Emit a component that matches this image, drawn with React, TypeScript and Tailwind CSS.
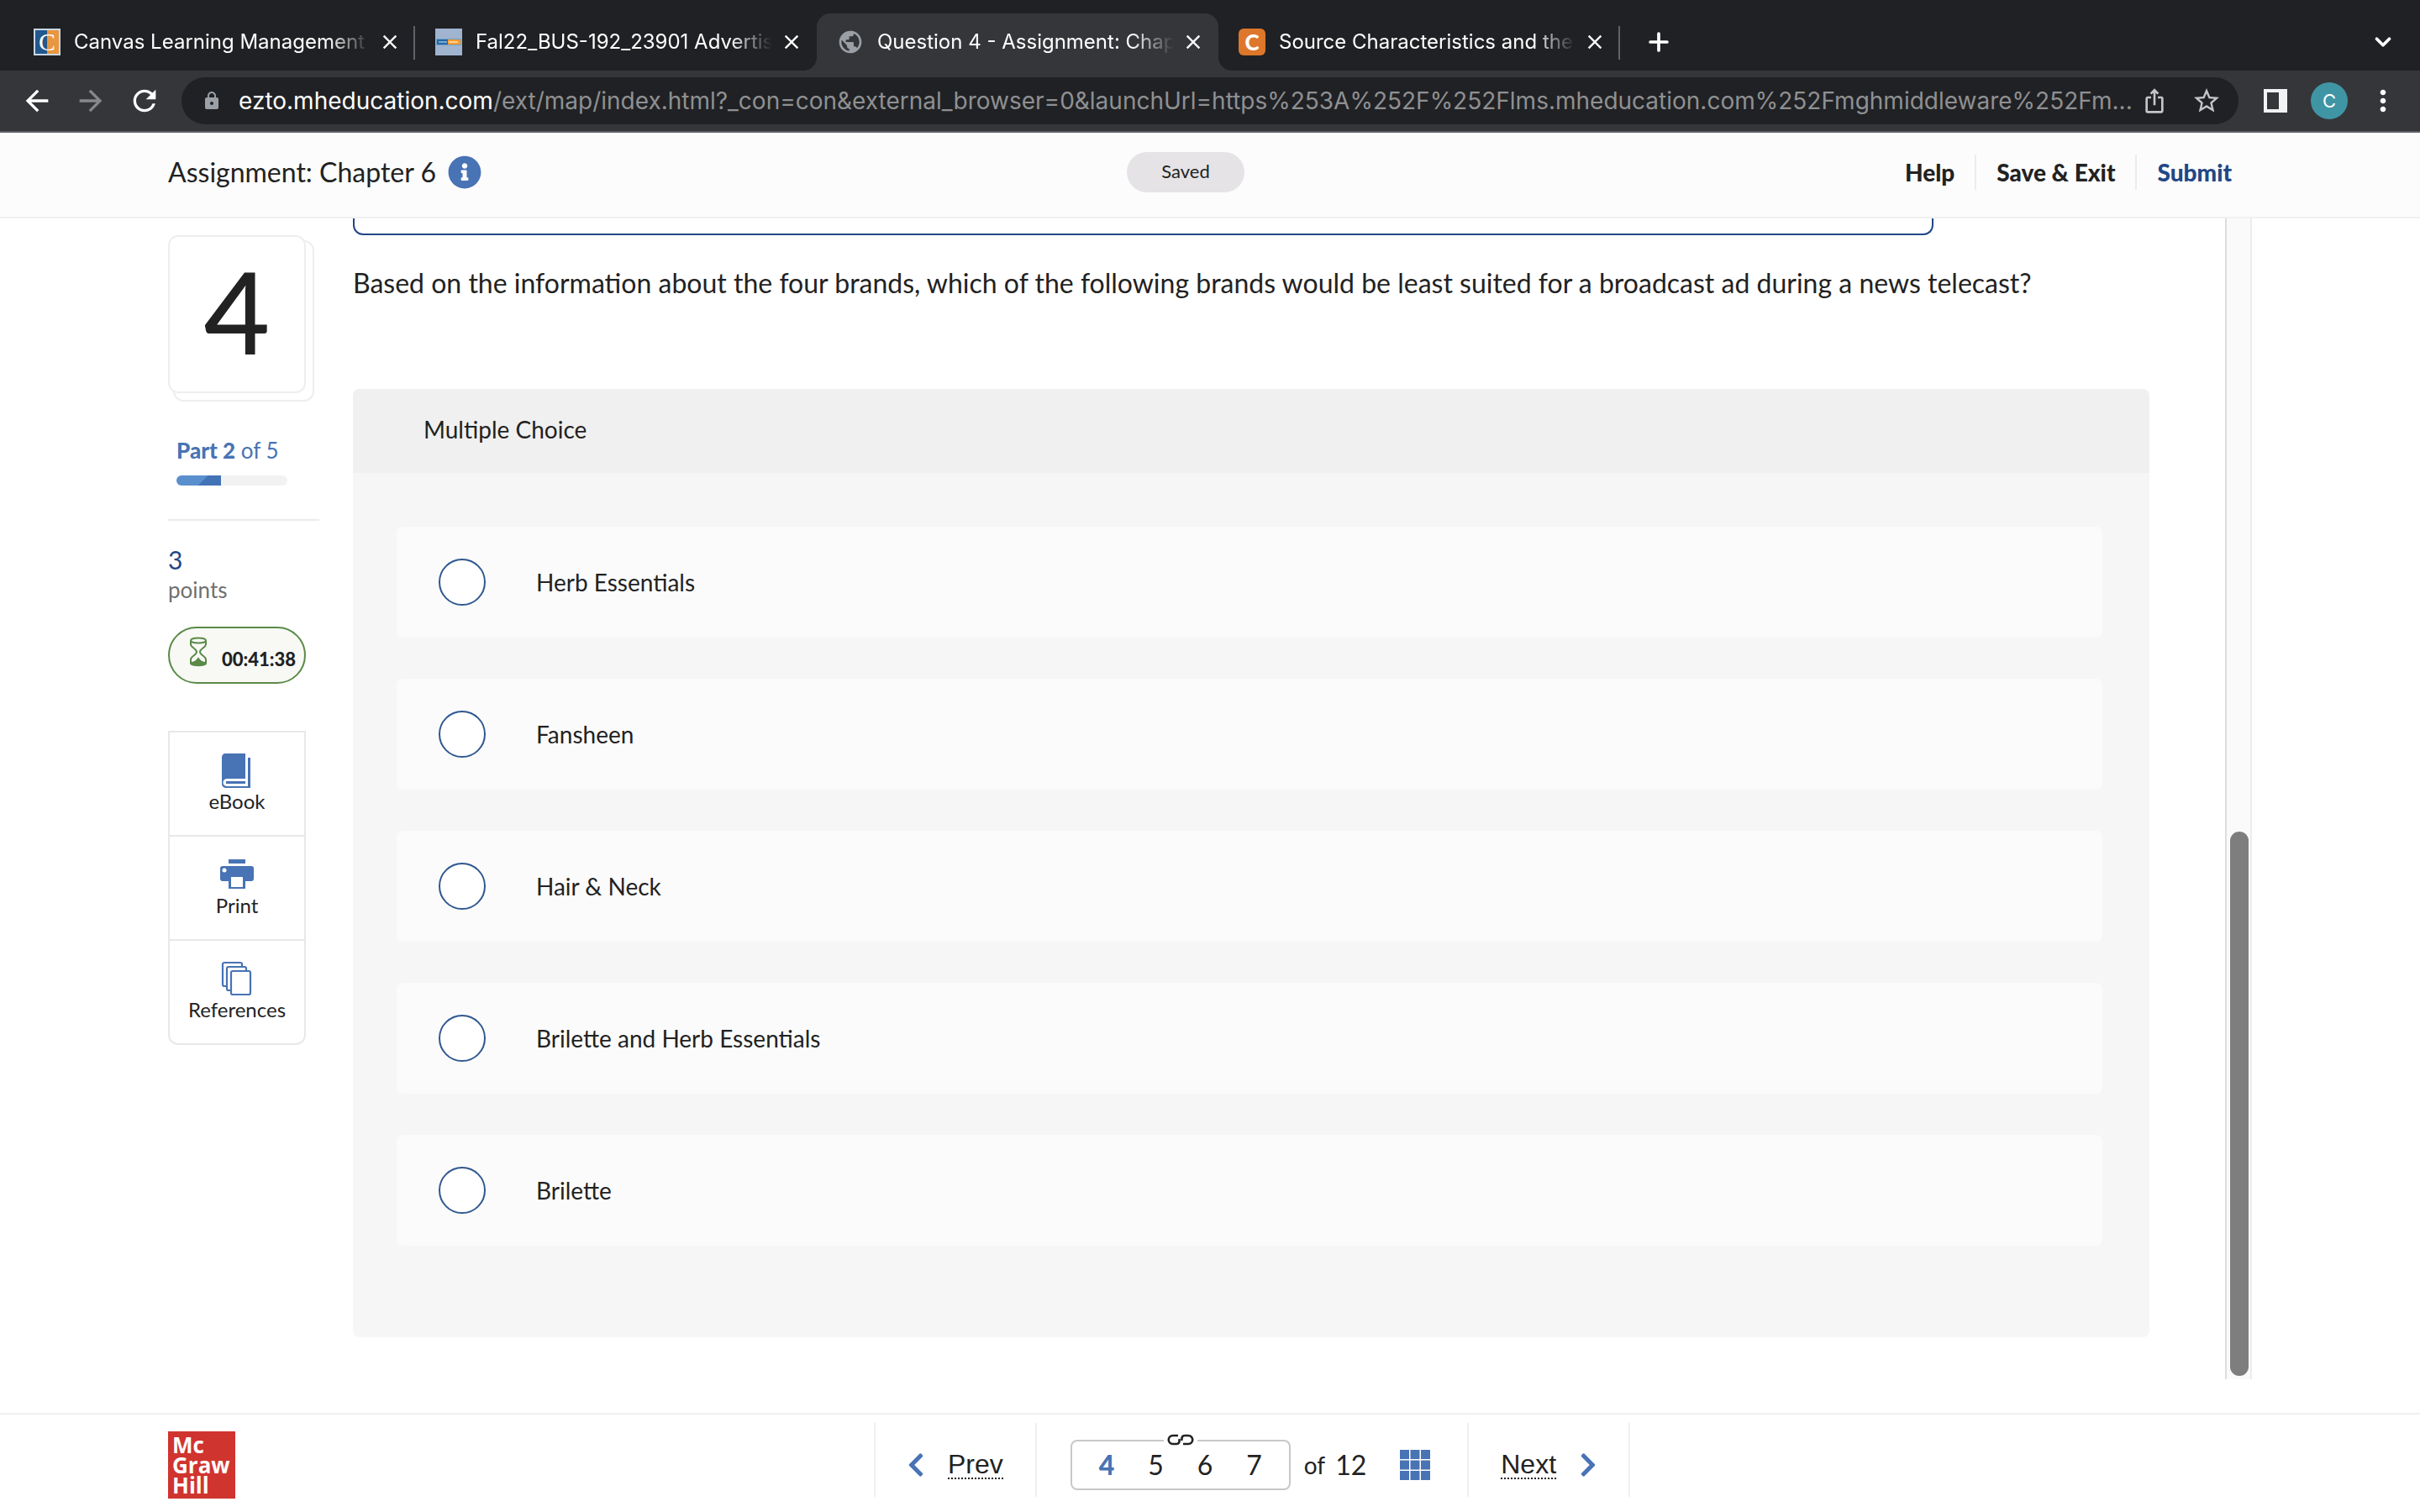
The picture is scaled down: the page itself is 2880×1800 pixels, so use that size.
import { useState } from "react";
import type { ReactNode } from "react";
import { FaChevronLeft, FaChevronRight, FaInfoCircle } from "react-icons/fa";
import { MdArrowBack, MdArrowForward, MdClose, MdIosShare, MdLock, MdMoreVert, MdPublic, MdRefresh, MdStarBorder } from "react-icons/md";
import { ChevronDown, Plus } from "lucide-react";

interface BrowserTab {
  title: string;
  icon: ReactNode;
  active?: boolean;
  divider?: boolean;
}

const choices = ["Herb Essentials", "Fansheen", "Hair & Neck", "Brilette and Herb Essentials", "Brilette"];

const browserTabs: BrowserTab[] = [
  { title: "Canvas Learning Management S", icon: <CanvasFavicon />, divider: true },
  { title: "Fal22_BUS-192_23901 Advertisi", icon: <CourseFavicon /> },
  { title: "Question 4 - Assignment: Chapt", icon: <MdPublic className="size-8 text-[#9aa0a6]" />, active: true },
  { title: "Source Characteristics and the", icon: <CheggFavicon />, divider: true },
];

function CanvasFavicon(): JSX.Element {
  return (
    <span className="flex size-8 items-center justify-center border-2 border-[#c9d8e6] bg-[linear-gradient(to_right,#22588c_50%,#e8963f_50%)] font-['Liberation_Serif',serif] text-[30px] leading-none text-white">
      C
    </span>
  );
}

function CourseFavicon(): JSX.Element {
  return (
    <svg viewBox="0 0 32 32" className="size-8">
      <rect width="32" height="32" fill="#a0b4d0" />
      <rect x="1" y="12" width="30" height="8" fill="#6fa0c8" />
      <rect x="2" y="13" width="13" height="6" fill="#2468a6" />
      <rect x="15" y="13" width="15" height="6" fill="#f59b2c" />
      <path d="M4 16h10" stroke="#7ea6cc" strokeWidth="2" />
      <path d="M16 16h11" stroke="#f9cf9a" strokeWidth="2" />
    </svg>
  );
}

function CheggFavicon(): JSX.Element {
  return <span className="flex size-8 items-center justify-center rounded-md bg-[#dd772b] font-['Lato',sans-serif] text-[26px] leading-none font-black text-white">C</span>;
}

function Tab({ title, icon, active, divider }: BrowserTab): JSX.Element {
  return (
    <div className={active ? "relative flex w-[478px] items-center rounded-t-2xl bg-[#35363a] pr-[14px] pl-6" : "relative flex w-[478px] items-center pr-[14px] pl-6"}>
      {active && (
        <>
          <span className="absolute bottom-0 -left-4 size-4 bg-[radial-gradient(circle_at_top_left,transparent_16px,#35363a_16px)]" />
          <span className="absolute -right-4 bottom-0 size-4 bg-[radial-gradient(circle_at_top_right,transparent_16px,#35363a_16px)]" />
        </>
      )}
      <button type="button" className="flex min-w-0 flex-1 items-center gap-4 text-left">
        <span className="shrink-0">{icon}</span>
        <span className="flex-1 overflow-hidden text-2xl whitespace-nowrap text-white [mask-image:linear-gradient(to_right,#000_84%,transparent_98%)]">{title}</span>
      </button>
      <button type="button" aria-label="Close tab" className="flex size-8 items-center justify-center text-white">
        <MdClose className="size-7" />
      </button>
      {divider && <span className="absolute top-[15px] right-0 h-10 w-[2px] bg-[#5f6368]" />}
    </div>
  );
}

function BrowserChrome(): JSX.Element {
  return (
    <div className="font-['Inter',sans-serif]">
      <div className="flex h-[84px] bg-[#202124] pt-4 pl-4">
        {browserTabs.map((tab) => (
          <Tab key={tab.title} {...tab} />
        ))}
        <button type="button" aria-label="New tab" className="ml-6 flex w-11 items-center justify-center text-white">
          <Plus size={34} strokeWidth={2.6} />
        </button>
        <button type="button" aria-label="Search tabs" className="mr-7 ml-auto flex w-8 items-center justify-center text-white">
          <ChevronDown size={30} strokeWidth={3} />
        </button>
      </div>
      <div className="flex h-[74px] items-center border-b-2 border-[#5f6368] bg-[#35363a] px-6 text-white">
        <button type="button" aria-label="Back" className="mr-6">
          <MdArrowBack className="size-10" />
        </button>
        <button type="button" aria-label="Forward" className="mr-6 text-[#86888a]">
          <MdArrowForward className="size-10" />
        </button>
        <button type="button" aria-label="Reload" className="mr-6">
          <MdRefresh className="size-10" />
        </button>
        <div className="relative flex h-14 min-w-0 flex-1 items-center rounded-full bg-[#202124] pr-5 pl-6">
          <input type="text" aria-label="Address" className="absolute inset-0 rounded-full bg-transparent" />
          <MdLock className="mr-5 size-6 shrink-0 text-[#9aa0a6]" />
          <span className="min-w-0 flex-1 overflow-hidden text-[28px] whitespace-nowrap text-[#8f9092]">
            <span className="text-white">ezto.mheducation.com</span>
            /ext/map/index.html?_con=con&amp;external_browser=0&amp;launchUrl=https%253A%252F%252Flms.mheducation.com%252Fmghmiddleware%252Fm...
          </span>
          <button type="button" aria-label="Share" className="relative mr-7 ml-1 text-[#c4c5c7]">
            <MdIosShare className="size-8" />
          </button>
          <button type="button" aria-label="Bookmark" className="relative text-[#c4c5c7]">
            <MdStarBorder className="size-9" />
          </button>
        </div>
        <button type="button" aria-label="Side panel" className="mr-7 ml-[30px]">
          <svg viewBox="0 0 28 28" className="size-7">
            <path fill="#f1f3f4" fillRule="evenodd" d="M0 0h28v28H0zM4 4v20h14V4z" />
          </svg>
        </button>
        <button type="button" aria-label="Profile" className="mr-[22px] flex size-11 items-center justify-center rounded-full bg-[#4095a5] text-[22px]">
          C
        </button>
        <button type="button" aria-label="Menu">
          <MdMoreVert className="size-10" />
        </button>
      </div>
    </div>
  );
}

function PageHeader(): JSX.Element {
  return (
    <header className="flex h-[102px] items-center border-b-2 border-[#f0f0f0] bg-[#fcfcfc] px-[200px] pb-[6px]">
      <div className="flex flex-1 items-center gap-[14px]">
        <h1 className="text-[32px]">Assignment: Chapter 6</h1>
        <button type="button" aria-label="Assignment information" className="text-[#4873b4]">
          <FaInfoCircle className="size-10" />
        </button>
      </div>
      <span className="mr-[58px] flex h-12 w-[140px] items-center justify-center rounded-full bg-[#e5e3e6] pb-1 text-[22px]">Saved</span>
      <nav className="flex h-10 flex-1 items-center justify-end text-[28px] font-black">
        <a href="#help" className="px-6">Help</a>
        <a href="#save" className="border-x-2 border-[#ececec] px-6">Save &amp; Exit</a>
        <a href="#submit" className="px-6 text-[#234785]">Submit</a>
      </nav>
    </header>
  );
}

function Tool({ label, children }: { label: string; children: ReactNode }): JSX.Element {
  return (
    <button type="button" className="flex h-[124px] flex-col items-center border-b-2 border-[#e8e8e8] pt-6 text-2xl leading-7 last:h-[122px] last:border-b-0">
      <svg viewBox="0 0 44 44" className="size-11" fill="#4873b4">
        {children}
      </svg>
      <span>{label}</span>
    </button>
  );
}

function Sidebar(): JSX.Element {
  return (
    <aside className="w-[180px] shrink-0 pt-5">
      <div className="relative mr-4 h-[188px]">
        <div className="absolute inset-0 top-[6px] left-[6px] -right-[10px] -bottom-[10px] rounded-xl border-2 border-[#eeeeee]" />
        <div className="relative flex h-full items-center justify-center rounded-xl border-2 border-[#eeeeee] bg-white pb-2 text-[136px] leading-none font-medium">4</div>
      </div>
      <div className="mt-[52px] pl-[10px]">
        <p className="text-[26px] leading-8 text-[#4873b4]">
          <b className="font-black">Part 2</b> of 5
        </p>
        <div className="mt-[14px] mr-[38px] h-3 overflow-hidden rounded-full bg-[#f2f2f2]">
          <div className="h-full w-2/5 bg-[linear-gradient(135deg,#5a8fce_57%,#4273b6_57%)]" />
        </div>
      </div>
      <hr className="mt-10 border-t-2 border-[#ebebeb]" />
      <p className="mt-[26px] text-[30px] leading-10 text-[#234785]">3</p>
      <p className="text-[26px] leading-8 text-[#707070]">points</p>
      <div className="mt-7 mr-4 flex h-[68px] items-center rounded-full border-2 border-[#5b8a48] bg-[#f8f9f5] pl-6">
        <svg viewBox="0 0 20 36" className="mb-2 h-9 w-5" fill="none" stroke="#5b8a48" strokeWidth="2">
          <ellipse cx="10" cy="4.5" rx="9" ry="3" />
          <path d="M1 5v4c0 4 7 5 7 9s-7 5-7 9v5M19 5v4c0 4-7 5-7 9s7 5 7 9v5" />
          <path d="M1 31c4 0 7-2 9-5 2 3 5 5 9 5v1c-2 3-16 3-18 0z" fill="#5b8a48" />
        </svg>
        <span className="mt-2 ml-[18px] text-[22px] font-black">00:41:38</span>
      </div>
      <div className="mt-14 mr-4 flex flex-col rounded-b-xl border-2 border-[#e8e8e8]">
        <Tool label="eBook">
          <path d="M8 1h24v30H10c-6 0-6 9 0 9h25V6h3v36H10c-4 0-6-2-6-5V5c0-2 2-4 4-4z" />
          <path d="M9 34h23v3H9z" />
        </Tool>
        <Tool label="Print">
          <path d="M12 3h20v5H12zM5 11h34q3 0 3 3v12q0 3-3 3h-7v9H12v-9H5q-3 0-3-3V14q0-3 3-3z" />
          <circle cx="7" cy="16" r="2.5" fill="#fff" />
          <path d="M15 24h14v12H15z" fill="#fff" />
        </Tool>
        <Tool label="References">
          <g fill="#fff" stroke="#4873b4" strokeWidth="2.2">
            <rect x="5" y="2" width="23" height="28" rx="2" />
            <rect x="10" y="7" width="23" height="28" rx="2" />
            <rect x="15" y="12" width="23" height="28" rx="2" />
          </g>
        </Tool>
      </div>
    </aside>
  );
}

function Question(): JSX.Element {
  const [selected, setSelected] = useState<string | null>(null);

  return (
    <main className="min-w-0 flex-1">
      <div className="h-5 w-[88%] rounded-b-xl border-2 border-t-0 border-[#234785]" />
      <p className="mt-[34px] text-[32px] leading-[46px]">
        Based on the information about the four brands, which of the following brands would be least suited for a broadcast ad during a news telecast?
      </p>
      <section className="mt-[103px] overflow-hidden rounded-lg bg-[#f6f6f6] pb-[109px]">
        <h2 className="bg-[#f0f0f0] px-[84px] pt-7 pb-8 text-[28px] leading-10">Multiple Choice</h2>
        <div className="mt-16 mr-14 ml-[52px] flex flex-col gap-[49px]">
          {choices.map((choice) => (
            <label key={choice} className="flex h-[132px] items-center gap-[60px] rounded-lg bg-[#fbfbfb] pl-[50px] text-[28px]">
              <input
                type="radio"
                name="answer"
                checked={selected === choice}
                onChange={() => setSelected(choice)}
                className="size-14 appearance-none rounded-full border-2 border-[#30588f] bg-white checked:bg-[#30588f]"
              />
              {choice}
            </label>
          ))}
        </div>
      </section>
    </main>
  );
}

function PageFooter(): JSX.Element {
  return (
    <footer className="grid h-[118px] grid-cols-[1fr_auto_1fr] border-t-2 border-[#f0f0f0] bg-white px-[200px] pt-[10px] text-[32px]">
      <div className="mt-[10px] flex size-20 flex-col bg-[#d0342f] pt-1 pl-[5px] font-['Open_Sans',sans-serif] text-[26px] leading-6 font-bold text-white">
        <span>Mc</span>
        <span>Graw</span>
        <span>Hill</span>
      </div>
      <nav className="ml-[100px] flex h-[88px] items-stretch divide-x-2 divide-[#f0f0f0] border-x-2 border-[#f0f0f0]">
        <button type="button" className="flex items-center gap-7 px-[38px] pt-3 font-['Liberation_Sans',sans-serif]">
          <FaChevronLeft className="h-8 w-5 text-[#4873b4]" />
          <span className="border-b-2 border-dotted border-[#222] leading-8">Prev</span>
        </button>
        <div className="flex items-center pt-3 pr-11 pl-10">
          <div className="relative flex h-[60px] w-[262px] items-center justify-between rounded-lg border-2 border-[#c8c8c8] px-8">
            <span className="absolute -top-[9px] left-1/2 -translate-x-1/2 bg-white px-1">
              <svg viewBox="0 0 32 14" className="h-[14px] w-8" fill="none" stroke="#222" strokeWidth="2.6">
                <path d="M13 2H7C0 2 0 12 7 12h4c3 0 4-2 3.500-6" />
                <path d="M19 12h6c7 0 7-10 0-10h-4c-3 0-4 2-3.500 6" />
              </svg>
            </span>
            <button type="button" className="font-black text-[#4873b4]">4</button>
            <button type="button">5</button>
            <button type="button">6</button>
            <button type="button">7</button>
          </div>
          <span className="ml-4 text-[28px]">of</span>
          <span className="ml-3">12</span>
          <button type="button" aria-label="All questions" className="ml-10">
            <svg viewBox="0 0 36 36" className="size-9" fill="#4873b4">
              <path d="M0 0h11v11H0zM12.5 0h11v11h-11zM25 0h11v11H25zM0 12.5h11v11H0zM12.5 12.5h11v11h-11zM25 12.5h11v11H25zM0 25h11v11H0zM12.5 25h11v11h-11zM25 25h11v11H25z" />
            </svg>
          </button>
        </div>
        <button type="button" className="flex items-center gap-7 px-[38px] pt-3 font-['Liberation_Sans',sans-serif]">
          <span className="border-b-2 border-dotted border-[#222] leading-8">Next</span>
          <FaChevronRight className="h-8 w-5 text-[#4873b4]" />
        </button>
      </nav>
    </footer>
  );
}

export default function App(): JSX.Element {
  return (
    <div className="flex h-screen flex-col bg-white font-['Lato',sans-serif] text-[#222]">
      <BrowserChrome />
      <PageHeader />
      <div className="mb-10 flex min-h-0 flex-1 px-[200px]">
        <Sidebar />
        <div className="ml-10 flex min-w-0 flex-1 overflow-hidden pr-[90px]">
          <Question />
        </div>
        <div className="flex w-8 shrink-0 flex-col justify-end border-x-2 border-l-[#dddddd] border-r-[#ececec] bg-[#fafafa] pr-[2px] pb-1 pl-1">
          <div className="h-[47%] rounded-full bg-[#7e7e7e]" />
        </div>
      </div>
      <PageFooter />
    </div>
  );
}
